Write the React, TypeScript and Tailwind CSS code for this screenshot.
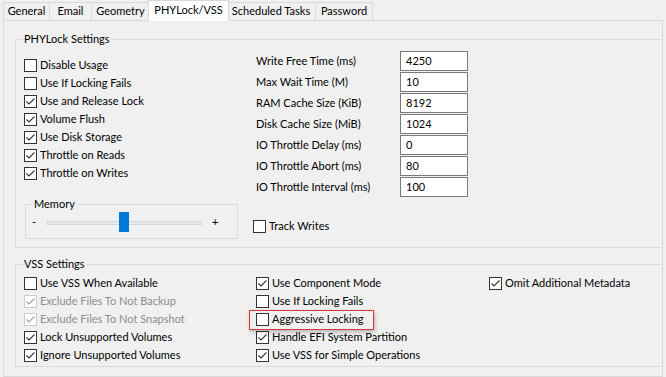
import React from 'react';

type Tab = { label: string; width: number };

const tabs: Tab[] = [
  { label: 'General', width: 47 },
  { label: 'Email', width: 42 },
  { label: 'Geometry', width: 58 },
  { label: 'PHYLock/VSS', width: 77 },
  { label: 'Scheduled Tasks', width: 89 },
  { label: 'Password', width: 57 },
];

const fields = [
  { label: 'Write Free Time (ms)', value: '4250' },
  { label: 'Max Wait Time (M)', value: '10' },
  { label: 'RAM Cache Size (KiB)', value: '8192' },
  { label: 'Disk Cache Size (MiB)', value: '1024' },
  { label: 'IO Throttle Delay (ms)', value: '0' },
  { label: 'IO Throttle Abort (ms)', value: '80' },
  { label: 'IO Throttle Interval (ms)', value: '100' },
];

const phyChecks: [string, boolean][] = [
  ['Disable Usage', false],
  ['Use If Locking Fails', false],
  ['Use and Release Lock', true],
  ['Volume Flush', true],
  ['Use Disk Storage', true],
  ['Throttle on Reads', true],
  ['Throttle on Writes', true],
];

const CheckBox: React.FC<{ label: string; checked?: boolean; disabled?: boolean }> = ({
  label,
  checked = false,
  disabled = false,
}) => (
  <div className="flex h-[18px] items-center gap-[3px] whitespace-nowrap">
    <span
      className={`flex h-[13px] w-[13px] shrink-0 items-center justify-center border bg-white ${
        disabled ? 'border-[#cccccc]' : 'border-[#333333]'
      }`}
    >
      {checked && (
        <svg width="11" height="11" viewBox="0 0 11 11">
          <polyline
            points="1.5,5.5 4,8 9.5,2.5"
            fill="none"
            stroke={disabled ? '#a0a0a0' : '#333333'}
            strokeWidth="1.1"
          />
        </svg>
      )}
    </span>
    <span className={disabled ? 'text-[#8d8d8d]' : 'text-black'}>{label}</span>
  </div>
);

const GroupLabel: React.FC<{ text: string; className?: string }> = ({ text, className = '' }) => (
  <span className={`absolute top-[-8px] bg-[#f0f0f0] px-px leading-[14px] ${className}`}>{text}</span>
);

export default function App() {
  return (
    <div className="relative h-[377px] w-[666px] overflow-hidden bg-[#f0f0f0] font-['Lato','Liberation_Sans',sans-serif] text-[11px] text-black">
      {/* tab strip */}
      <div className="flex h-[20px] items-end pl-[3px]">
        {tabs.map((t) => {
          const active = t.label === 'PHYLock/VSS';
          return (
            <div
              key={t.label}
              style={{ width: active ? t.width + 4 : t.width }}
              className={
                active
                  ? 'z-10 mx-[-2px] mb-[-1px] flex h-[21px] items-center justify-center whitespace-nowrap border border-b-0 border-[#d9d9d9] bg-white pb-[2px]'
                  : 'flex h-[18px] items-center justify-center whitespace-nowrap border border-b-0 border-l-0 border-[#d9d9d9] bg-[#f0f0f0] first:border-l'
              }
            >
              {t.label}
            </div>
          );
        })}
      </div>

      {/* tab page */}
      <div className="ml-[3px] h-[357px] w-[660px] overflow-hidden border border-[#d9d9d9] bg-[#f0f0f0] pl-[11px] pt-[18px]">
        {/* PHYLock Settings */}
        <div className="relative flex h-[209px] w-[700px] border border-[#dcdcdc]">
          <GroupLabel text="PHYLock Settings" className="left-[7px]" />
          <div className="flex w-[240px] flex-col pl-[8px] pt-[16px]">
            {phyChecks.map(([l, c]) => (
              <CheckBox key={l} label={l} checked={c} />
            ))}
            <div className="relative ml-px mt-[22px] flex h-[35px] w-[213px] items-center border border-[#dcdcdc] pl-[6px] pt-[2px]">
              <GroupLabel text="Memory" className="left-[7px]" />
              <span className="w-[15px]">-</span>
              <div className="relative h-[4px] w-[155px] border border-[#d6d6d6] bg-[#e7eaea]">
                <div className="absolute left-[71px] top-[-10px] h-[20px] w-[10px] bg-[#0078d7]" />
              </div>
              <span className="ml-[10px]">+</span>
            </div>
          </div>
          <div className="flex flex-col pt-[11px]">
            <div className="flex flex-col gap-[1px]">
              {fields.map((f) => (
                <div key={f.label} className="flex h-[20px] items-center">
                  <span className="w-[144px] whitespace-nowrap">{f.label}</span>
                  <span className="flex h-[20px] w-[68px] items-center border border-[#7a7a7a] bg-white pl-[5px]">
                    {f.value}
                  </span>
                </div>
              ))}
            </div>
            <div className="ml-[-3px] mt-[20px]">
              <CheckBox label="Track Writes" />
            </div>
          </div>
        </div>

        {/* VSS Settings */}
        <div className="relative mt-[16px] flex h-[103px] w-[700px] border border-[#dcdcdc] pl-[8px] pt-[9px]">
          <GroupLabel text="VSS Settings" className="left-[7px]" />
          <div className="flex w-[232px] flex-col">
            <CheckBox label="Use VSS When Available" />
            <CheckBox label="Exclude Files To Not Backup" checked disabled />
            <CheckBox label="Exclude Files To Not Snapshot" checked disabled />
            <CheckBox label="Lock Unsupported Volumes" checked />
            <CheckBox label="Ignore Unsupported Volumes" checked />
          </div>
          <div className="flex w-[233px] flex-col">
            <CheckBox label="Use Component Mode" checked />
            <CheckBox label="Use If Locking Fails" />
            <CheckBox label="Aggressive Locking" />
            <CheckBox label="Handle EFI System Partition" checked />
            <CheckBox label="Use VSS for Simple Operations" checked />
          </div>
          <div className="flex flex-col">
            <CheckBox label="Omit Additional Metadata" checked />
          </div>
        </div>
      </div>

      {/* highlight annotation */}
      <div className="absolute left-[249px] top-[310px] h-[20px] w-[125px] border border-[#d23a3a] shadow-[1px_2px_4px_rgba(0,0,0,0.25)]" />
    </div>
  );
}
